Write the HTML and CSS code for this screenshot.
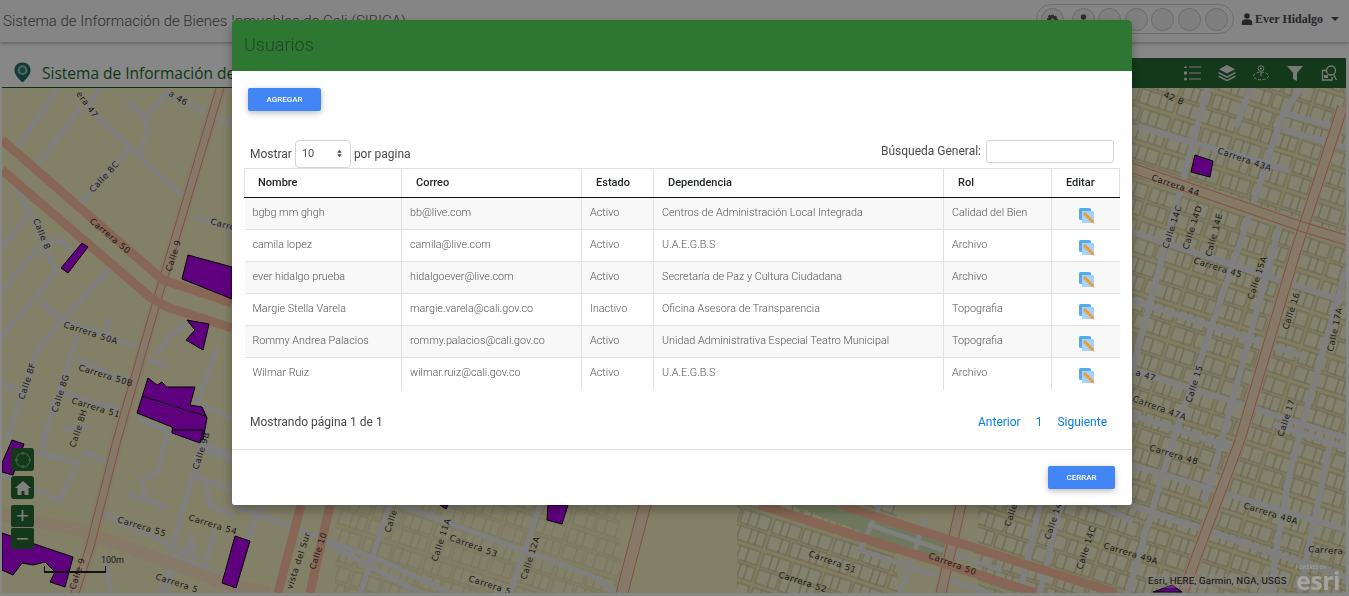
FILE: index.html
```html
<!DOCTYPE html>
<html lang="es">
<head>
<meta charset="utf-8">
<title>SIBICA</title>
<link rel="stylesheet" href="styles.css">
</head>
<body>
<header class="topbar">
  <div class="app-title">Sistema de Información de Bienes Inmuebles de Cali (SIBICA)</div>
  <div class="top-right">
    <div class="pill">
      <span class="circle"><svg viewBox="0 0 16 16" class="circle-ico"><path d="M6.5 2h3l.4 2 1.8-.9 2 2-1 1.8 2 .5v2.800l-2 .5 1 1.800-2 2-1.800-1-.4 2h-3l-.4-2-1.800 1-2-2 1-1.800-2-.5V6.400l2-.5-1-1.800 2-2 1.800.9z" fill="#555"/><circle cx="8" cy="8" r="2" fill="#bbb"/></svg></span>
      <span class="circle"><svg viewBox="0 0 16 16" class="circle-ico"><circle cx="8" cy="5" r="3.400" fill="#555"/><path d="M2.500 16c0-5 2-6.500 5.500-6.500s5.500 1.500 5.500 6.500z" fill="#555"/></svg></span>
      <span class="circle"></span><span class="circle"></span><span class="circle"></span><span class="circle"></span><span class="circle"></span>
    </div>
    <div class="user">
      <svg viewBox="0 0 12 12" class="user-ico"><circle cx="6" cy="3" r="2.800"/><path d="M.8 12V9.500C.8 7.500 2.500 6.300 6 6.300s5.200 1.200 5.200 3.200V12z"/></svg>
      <span class="user-name">Ever Hidalgo</span>
      <span class="caret"></span>
    </div>
  </div>
</header>

<main class="workspace">
  <div class="map-head">
    <div class="map-brand">
      <svg viewBox="0 0 18 22" class="pin"><path d="M9 .5C4 .5.5 4 .5 8.500c0 5 5 9.500 8.500 13 3.500-3.500 8.500-8 8.500-13C17.500 4 14 .5 9 .5z" fill="#1f6f6a"/><circle cx="9" cy="8.500" r="5.200" fill="#9ac7b8"/><circle cx="9" cy="8.500" r="3" fill="#2c7f70"/></svg>
      <span class="brand-text">Sistema de Información de Bienes Inmuebles de Cali</span>
    </div>
    <div class="map-tools">
      <svg viewBox="0 0 18 16" class="tool"><g stroke="#e6e6e6" stroke-width="1.100"><path d="M5 2h12M5 8h12M5 14h12"/></g><path d="M1.500 .5l1.500 2.500H0z M0 6.500h3v3H0z" fill="#e6e6e6"/><circle cx="1.500" cy="14" r="1.500" fill="#e6e6e6"/></svg>
      <svg viewBox="0 0 18 16" class="tool"><path d="M9 0l8 4.200-8 4.200-8-4.200z" fill="#e6e6e6"/><path d="M1 7l8 4.200L17 7l.8 1.200L9 13 .2 8.200z M1 10.500l8 4.200 8-4.200.8 1.200L9 16.500.2 11.700z" fill="#e6e6e6"/></svg>
      <svg viewBox="0 0 18 16" class="tool"><g fill="none" stroke="#e6e6e6"><circle cx="9" cy="3.500" r="2.800"/><path d="M9 6.500v5"/><ellipse cx="9" cy="11" rx="7.500" ry="3.800" stroke-dasharray="3 1.500"/></g><circle cx="9" cy="3.500" r="1" fill="#e6e6e6"/></svg>
      <svg viewBox="0 0 18 16" class="tool"><path d="M1 1h16l-6 7v8l-4-2V8z" fill="#e6e6e6"/></svg>
      <svg viewBox="0 0 18 16" class="tool"><g fill="none" stroke="#e6e6e6" stroke-width="1.300"><circle cx="11" cy="5.500" r="4.500"/><path d="M13.500 9.500l3 5.500M6 5.500H2.500V15H12v-3"/></g><path d="M4 10h4v3H4z" fill="#e6e6e6"/></svg>
    </div>
  </div>

  <div class="map">
    <svg class="map-svg" viewBox="2 88 1344 505" preserveAspectRatio="none">
      <defs>
        <pattern id="lots" width="64" height="36" patternUnits="userSpaceOnUse" patternTransform="rotate(18)">
          <rect width="64" height="36" fill="#f2ecb8"/>
          <g fill="#f8f5d2" stroke="#bdb78e" stroke-width=".8">
            <rect x="2" y="2" width="9" height="14"/><rect x="11" y="2" width="7" height="14"/><rect x="18" y="2" width="12" height="14"/><rect x="33" y="2" width="8" height="14"/><rect x="41" y="2" width="9" height="14"/><rect x="50" y="2" width="12" height="14"/>
            <rect x="2" y="19" width="13" height="14"/><rect x="15" y="19" width="8" height="14"/><rect x="26" y="19" width="9" height="14"/><rect x="35" y="19" width="12" height="14"/><rect x="47" y="19" width="7" height="14"/><rect x="54" y="19" width="8" height="14"/>
          </g>
        </pattern>
      </defs>
      <rect x="0" y="0" width="1349" height="600" fill="#f6f2c2"/>
      <rect x="1132" y="88" width="217" height="510" fill="url(#lots)"/>
      <rect x="335" y="505" width="285" height="90" fill="url(#lots)" opacity=".45"/>
      <rect x="737" y="505" width="160" height="90" fill="url(#lots)"/>
      <rect x="978" y="505" width="157" height="90" fill="url(#lots)"/>
      <path d="M790 505H835L950 545L950 565z" fill="#d2e0b0"/>

      <g class="road">
        <path d="M128 102L145 118L148 130L140 152"/><path d="M167 93L145 118"/><path d="M87 107L183 197"/><path d="M128 150L80 203"/>
        <path d="M80 107L38 165"/><path d="M57 90L17 147"/><path d="M100 90L87 107"/><path d="M197 217L232 230"/><path d="M170 95L232 125"/>
        <path d="M17 190L33 218L55 270"/><path d="M2 247L30 213"/><path d="M2 290L43 243L60 240L73 253"/><path d="M2 337L55 273"/>
        <path d="M110 268L62 320L37 350L7 440"/><path d="M42 303L62 320L140 348"/><path d="M77 337L43 440"/><path d="M2 383L25 393"/><path d="M63 393L123 412"/>
        <path d="M77 360L133 383"/><path d="M157 353L173 333L186 325"/><path d="M110 320L105 337"/><path d="M217 350L197 403"/><path d="M150 360L165 365"/>
        <path d="M200 405L232 418"/><path d="M88 427L65 430"/><path d="M140 420L232 455"/>
        <path d="M48 430L40 453L78 463L60 500"/><path d="M2 475L60 500"/><path d="M85 452L106 462"/><path d="M168 430L158 472L142 480L145 495M130 495L166 507"/>
        <path d="M205 432L180 520L170 552"/><path d="M195 475L232 490"/><path d="M205 450L232 460"/><path d="M205 480L210 505L232 515"/><path d="M107 515L170 545L198 558"/><path d="M195 545L160 590"/>
        <path d="M192 537L188 555M215 533L205 565"/><path d="M176 556L220 575"/><path d="M172 556L165 593"/><path d="M105 560L110 593"/>
        <path d="M232 505L380 560L450 593"/><path d="M262 505L225 593"/><path d="M390 505L360 593"/><path d="M540 505L510 593"/>
        <path d="M400 505L590 575L620 593"/><path d="M330 545L420 593"/>
        <path d="M880 505L860 550L990 593"/><path d="M870 525L1000 570"/><path d="M925 520L900 593"/>
      </g>
      <g class="road wide">
        <path d="M1207 90L1132 370"/><path d="M1283 113L1247 223L1173 440L1128 593"/><path d="M1140 127L1287 170"/><path d="M1135 233L1340 300"/><path d="M1132 370L1343 437"/>
        <path d="M1132 300L1300 355"/><path d="M1250 90L1237 125"/><path d="M1300 90L1283 113L1346 130"/><path d="M1285 130L1346 148"/>
        <path d="M1280 225L1230 410L1205 500"/><path d="M1346 270L1312 390L1290 470L1270 590"/><path d="M1276 425L1346 448"/>
        <path d="M1132 465L1346 530"/><path d="M1130 505L1345 577"/><path d="M1132 415L1240 450"/>
        <path d="M1330 445L1300 590"/><path d="M1040 505L1020 593"/><path d="M1060 505L1040 593"/><path d="M1100 505L1130 520"/>
      </g>

      <g class="ave">
        <path d="M220 88L160 290L117 440L90 547L75 593"/>
        <path d="M1343 107L1297 247L1240 440L1183 593"/>
        <path d="M1132 168L1303 227L1346 240"/>
        <path d="M645 505L622 593"/>
        <path d="M961 505L941 593"/>
        <path d="M2 515L80 530L230 585L270 593"/>
      </g>
      <g class="ave-line">
        <path d="M216 88L156 290L113 440L86 547L71 593"/><path d="M224 88L164 290L121 440L94 547L79 593"/>
        <path d="M1338 105L1292 247L1235 440L1178 593"/><path d="M1348 107L1302 247L1245 440L1188 593"/>
        <path d="M1132 163L1303 222L1346 235"/><path d="M1132 173L1303 232L1346 245"/>
        <path d="M639 505L616 593"/><path d="M651 505L628 593"/><path d="M956 505L936 593"/><path d="M966 505L946 593"/>
      </g>
      <g class="arterial">
        <path d="M2 140L163 280L232 303"/><path d="M2 170L150 297L167 307L232 328"/>
        <path d="M760 505L1036 593"/><path d="M840 505L1116 593"/>
        <path d="M301 505L278 593"/><path d="M330 505L310 593"/>
      </g>

      <g class="plot">
        <path d="M82 243L88 247L68 273L61 268z"/>
        <path d="M188 255L232 267V299L182 279z"/>
        <path d="M187 320L209 324L203 350L186 340L195 330z"/>
        <path d="M148 378L157 385L162 382L167 387L195 387L190 405L202 407L207 418L203 440L173 433L172 427L137 413z"/>
        <path d="M142 396L205 416" fill="none"/>
        <path d="M12 440L24 444L13 475L2 472V463z"/>
        <path d="M2 533L73 557L65 587L50 582L55 572L45 562L33 565L22 563L13 575L2 570z"/>
        <path d="M172 430H203L200 443L172 433z"/>
        <path d="M235 536L250 541L236 588L222 583z"/>
        <path d="M1195 155L1213 161L1210 177L1191 172z"/>
        <path d="M548 505H568L562 524L547 520z"/>
        <path d="M440 505H448L446 509z"/>
        <path d="M1153 592L1172 585L1182 592z"/>
      </g>

      <g class="lbl">
        <text transform="translate(89 222) rotate(40)" letter-spacing="1.500">Carrera 50</text>
        <text transform="translate(63 327) rotate(18)">Carrera 50A</text>
        <text transform="translate(78 370) rotate(17)">Carrera 50B</text>
        <text transform="translate(71 403) rotate(17)">Carrera 51</text>
        <text transform="translate(171 272) rotate(-72)">Calle 9</text>
        <text transform="translate(93 193) rotate(-47)">Calle 8C</text>
        <text transform="translate(33 220) rotate(68)">Calle 8</text>
        <text transform="translate(24 400) rotate(-72)">Calle 8F</text>
        <text transform="translate(57 413) rotate(-72)">Calle 8G</text>
        <text transform="translate(75 448) rotate(-72)">Calle 8H</text>
        <text transform="translate(76 94) rotate(54)">era 47</text>
        <text transform="translate(168 95) rotate(32)">a 46</text>
        <text transform="translate(210 224) rotate(15)">Carre</text>
        <text transform="translate(117 522) rotate(17)">Carrera 55</text>
        <text transform="translate(188 520) rotate(17)">Carrera 54</text>
        <text transform="translate(198 470) rotate(-72)">Calle 9B</text>
        <text transform="translate(75 590) rotate(-72)">Calle 9</text>
        <text transform="translate(155 579) rotate(18)">Carrera 5</text>
        <text transform="translate(1163 97) rotate(22)">42 B</text>
        <text transform="translate(1217 153) rotate(19)" letter-spacing=".6">Carrera 43A</text>
        <text transform="translate(1151 180) rotate(19)" letter-spacing="1.200">Carrera 44</text>
        <text transform="translate(1168 249) rotate(-72)">Calle 14C</text>
        <text transform="translate(1188 250) rotate(-72)">Calle 14D</text>
        <text transform="translate(1211 257) rotate(-75)">Calle 14E</text>
        <text transform="translate(1193 263) rotate(17)" letter-spacing=".4">Carrera 45</text>
        <text transform="translate(1253 300) rotate(-72)">Calle 15A</text>
        <text transform="translate(1288 330) rotate(-72)">Calle 16</text>
        <text transform="translate(1333 352) rotate(-78)">Calle 17A</text>
        <text transform="translate(1191 403) rotate(-72)">Calle 15</text>
        <text transform="translate(1283 437) rotate(-72)">Calle 17</text>
        <text transform="translate(1135 375) rotate(18)">a 47</text>
        <text transform="translate(1132 401) rotate(20)">Carrera 47A</text>
        <text transform="translate(1149 450) rotate(17)">Carrera 48</text>
        <text transform="translate(1243 508) rotate(17)">Carrera 48A</text>
        <text transform="translate(1103 548) rotate(17)">Carrera 49A</text>
        <text transform="translate(1308 552) rotate(4)">Carrera</text>
        <text transform="translate(449 540) rotate(20)">Carrera 53</text>
        <text transform="translate(468 581) rotate(18)">Carrera 5</text>
        <text transform="translate(390 533) rotate(-72)">Calle</text>
        <text transform="translate(437 562) rotate(-72)">Calle 11A</text>
        <text transform="translate(526 580) rotate(-72)">Calle 12A</text>
        <text transform="translate(808 556) rotate(20)">Carrera 51</text>
        <text transform="translate(778 577) rotate(18)">Carrera 52</text>
        <text transform="translate(928 558) rotate(20)">Carrera 50</text>
        <text transform="translate(292 590) rotate(-72)" letter-spacing="1.500">vista del Sur</text>
        <text transform="translate(315 570) rotate(-72)" letter-spacing=".8">Calle 10</text>
        <text transform="translate(1010 527) rotate(-72)">Calle</text>
        <text transform="translate(1050 540) rotate(-72)">Calle 14</text>
        <text transform="translate(1082 570) rotate(-72)">Calle 14C</text>
      </g>
    </svg>

    <div class="geo-btn locate"><svg viewBox="0 0 20 20" class="geo-ico"><circle cx="10" cy="10" r="7" fill="none" stroke="#8fbf95" stroke-width="1"/><path d="M10 2v3M10 15v3M2 10h3M15 10h3" stroke="#8fbf95" stroke-width="1"/></svg></div>
    <div class="geo-btn home"><svg viewBox="0 0 20 20" class="geo-ico"><path d="M10 3L2 10h2.500v7h4v-4h3v4h4v-7H18z" fill="#f0f0f0"/></svg></div>
    <div class="zoom-group">
      <div class="zoom-btn">+</div>
      <div class="zoom-btn">−</div>
    </div>
    <div class="scale"><span class="scale-label">100m</span></div>
    <div class="attrib">Esri, HERE, Garmin, NGA, USGS</div>
    <div class="esri"><span class="esri-powered">POWERED BY</span><span class="esri-word">esri</span></div>
  </div>
</main>

<div class="backdrop"></div>

<section class="modal">
  <div class="modal-head"><h1 class="modal-title">Usuarios</h1></div>
  <div class="modal-body">
    <div class="add-row"><button class="btn">AGREGAR</button></div>
    <div class="dt-controls">
      <div class="dt-length">Mostrar
        <span class="select"><span>10</span><svg viewBox="0 0 8 12" class="select-arrows"><path d="M4 1l3 4H1zM4 11L1 7h6z" fill="#444"/></svg></span>
        por pagina</div>
      <div class="dt-search">Búsqueda General:<span class="input"></span></div>
    </div>
    <table class="users">
      <colgroup><col class="c1"><col class="c2"><col class="c3"><col class="c4"><col class="c5"><col class="c6"></colgroup>
      <thead>
        <tr><th>Nombre</th><th>Correo</th><th>Estado</th><th>Dependencia</th><th>Rol</th><th>Editar</th></tr>
      </thead>
      <tbody>
        <tr><td>bgbg mm ghgh</td><td>bb@live.com</td><td>Activo</td><td>Centros de Administración Local Integrada</td><td>Calidad del Bien</td><td class="edit"><svg viewBox="0 0 18 18" class="edit-ico"><use href="#edit"/></svg></td></tr>
        <tr><td>camila lopez</td><td>camila@live.com</td><td>Activo</td><td>U.A.E.G.B.S</td><td>Archivo</td><td class="edit"><svg viewBox="0 0 18 18" class="edit-ico"><use href="#edit"/></svg></td></tr>
        <tr><td>ever hidalgo prueba</td><td>hidalgoever@live.com</td><td>Activo</td><td>Secretaría de Paz y Cultura Ciudadana</td><td>Archivo</td><td class="edit"><svg viewBox="0 0 18 18" class="edit-ico"><use href="#edit"/></svg></td></tr>
        <tr><td>Margie Stella Varela</td><td>margie.varela@cali.gov.co</td><td>Inactivo</td><td>Oficina Asesora de Transparencia</td><td>Topografia</td><td class="edit"><svg viewBox="0 0 18 18" class="edit-ico"><use href="#edit"/></svg></td></tr>
        <tr><td>Rommy Andrea Palacios</td><td>rommy.palacios@cali.gov.co</td><td>Activo</td><td>Unidad Administrativa Especial Teatro Municipal</td><td>Topografia</td><td class="edit"><svg viewBox="0 0 18 18" class="edit-ico"><use href="#edit"/></svg></td></tr>
        <tr class="last"><td>Wilmar Ruiz</td><td>wilmar.ruiz@cali.gov.co</td><td>Activo</td><td>U.A.E.G.B.S</td><td>Archivo</td><td class="edit"><svg viewBox="0 0 18 18" class="edit-ico"><use href="#edit"/></svg></td></tr>
      </tbody>
    </table>
    <div class="dt-foot">
      <div class="dt-info">Mostrando página 1 de 1</div>
      <nav class="pager"><a>Anterior</a><a>1</a><a>Siguiente</a></nav>
    </div>
  </div>
  <div class="modal-foot"><button class="btn">CERRAR</button></div>
</section>

<svg class="sprite" width="0" height="0">
  <symbol id="edit" viewBox="0 0 18 18">
    <rect x="1" y="1" width="12" height="12" rx="1.500" fill="#58aaf0"/>
    <rect x="4" y="4" width="12" height="12" rx="1" fill="#a5d2f8"/>
    <path d="M6 6L15 15" stroke="#f39c2c" stroke-width="3"/>
    <path d="M14.500 13.500l2.800 3.800-3.800-2.800z" fill="#e77f7f"/>
  </symbol>
</svg>
</body>
</html>
```
FILE: styles.css
```css
* { box-sizing: border-box; }
html, body { margin: 0; padding: 0; }
body {
  width: 1349px;
  height: 596px;
  overflow: hidden;
  background: #fff;
  font-family: Roboto, "Liberation Sans", sans-serif;
  color: #212529;
}
.topbar {
  height: 42px;
  background: #fbfbfb;
  box-shadow: 0 1px 4px rgba(0,0,0,.35);
  display: flex;
  align-items: center;
  justify-content: space-between;
  padding: 0 10px 0 3px;
}
.app-title { font-size: 15px; font-weight: 300; color: #5a5a5a; }
.top-right { display: flex; align-items: center; gap: 7px; }
.pill {
  width: 198px;
  height: 30px;
  border: 1px solid #d0d0d0;
  border-radius: 15px;
  display: flex;
  align-items: center;
  padding-left: 4px;
  gap: 3.600px;
  position: relative;
  top: -2px;
}
.circle {
  width: 23px;
  height: 23px;
  border-radius: 50%;
  border: 1px solid #c8c8c8;
  background: #f0f0f0;
  display: flex;
  align-items: center;
  justify-content: center;
}
.circle:nth-child(1) { margin-right: 4px; }
.circle-ico { width: 13px; height: 13px; }
.user { display: flex; align-items: center; gap: 2px; position: relative; top: -2px; }
.user-ico { width: 12px; height: 12px; fill: #4a4a4a; }
.user-name { font-family: "Liberation Serif", serif; font-weight: 700; font-size: 12px; color: #4a4a4a; width: 74px; }
.caret { width: 0; height: 0; border: 4px solid transparent; border-top-color: #4a4a4a; border-bottom: 0; }

.workspace { padding: 16px 3px 0 2px; }
.map-head {
  height: 30px;
  display: flex;
  justify-content: space-between;
  background: #fff;
  border-bottom: 1px solid #1b5e20;
}
.map-brand { display: flex; align-items: center; gap: 11px; padding-left: 12px; }
.pin { width: 17px; height: 21px; }
.brand-text { font-family: "Open Sans", sans-serif; font-size: 15.500px; color: #1e6b2c; white-space: nowrap; }
.map-tools {
  width: 700px;
  background: #246b32;
  margin-bottom: -1px;
  display: flex;
  align-items: center;
  justify-content: flex-end;
  gap: 16px;
  padding-right: 8px;
}
.tool { width: 18px; height: 16px; }

.map { position: relative; height: 505px; overflow: hidden; }
.map-svg { display: block; width: 1344px; height: 505px; }
.road path { fill: none; stroke: #f0f0f0; stroke-width: 5; stroke-linecap: round; stroke-linejoin: round; }
.road.wide path { stroke-width: 6; }
.ave path { fill: none; stroke: #ffe4c2; stroke-width: 13; stroke-linejoin: round; }
.ave-line path { fill: none; stroke: #f09a82; stroke-width: 1; }
.arterial path { fill: none; stroke: #ffc0a0; stroke-width: 9; stroke-linejoin: round; }
.plot path { fill: #b400f0; stroke: #000; stroke-width: 1; }
.lbl text { font-family: "DejaVu Sans", sans-serif; font-size: 8.500px; letter-spacing: .5px; fill: #333; }

.geo-btn { position: absolute; left: 9px; width: 23px; height: 23px; background: #246b32; border-radius: 3px; display: flex; align-items: center; justify-content: center; }
.geo-btn.locate { top: 360px; }
.geo-btn.home { top: 388px; }
.geo-ico { width: 20px; height: 20px; }
.zoom-group { position: absolute; left: 9px; top: 417px; width: 23px; }
.zoom-btn { height: 22px; background: #246b32; color: #eee; font: 400 22px/21px "Liberation Sans", sans-serif; text-align: center; border-radius: 2px; }
.zoom-btn + .zoom-btn { border-top: 1px solid #ddd; }
.scale { position: absolute; left: 42px; top: 478px; width: 62px; height: 7px; border: 1px solid #222; border-width: 0 1px 2px; }
.scale-label { position: absolute; right: -19px; top: -11px; font-size: 9px; color: #333; }
.attrib { position: absolute; left: 1144px; top: 486px; height: 14px; padding: 0 2px; background: rgba(255,255,255,.35); font-size: 9.700px; line-height: 14px; letter-spacing: .2px; color: #222; white-space: nowrap; }
.esri { position: absolute; z-index: 1; left: 1294px; top: 477px; display: flex; flex-direction: column; color: #a4a4a0; }
.esri-powered { font-size: 4.500px; letter-spacing: .3px; line-height: 5px; }
.esri-word { font: 700 25px/20px "Open Sans", sans-serif; letter-spacing: -.5px; }

.backdrop { position: fixed; inset: 0; background: rgba(0,0,0,.47); }

.modal {
  position: fixed;
  z-index: 2;
  left: 232px;
  top: 20px;
  width: 900px;
  height: 485px;
  background: #fff;
  border-radius: 3px;
  box-shadow: 0 5px 12px rgba(0,0,0,.3);
  display: flex;
  flex-direction: column;
  overflow: hidden;
}
.modal-head { height: 51px; background: #2e7733; padding: 14px 12px 0; flex: none; }
.modal-title { margin: 0; font-size: 18px; font-weight: 300; line-height: 22px; color: #1f4526; }
.modal-body { flex: 1; padding: 17px 12px 0; min-height: 0; }
.add-row { height: 52px; padding-left: 4px; }
.btn {
  display: block;
  height: 23px;
  width: 73px;
  padding: 0;
  border: 0;
  border-radius: 2px;
  background: #4285f4;
  color: #fff;
  font: 500 8px Roboto, sans-serif;
  box-shadow: 0 2px 5px rgba(0,0,0,.16), 0 2px 10px rgba(0,0,0,.12);
}
.dt-controls { display: flex; justify-content: space-between; align-items: flex-start; height: 28px; padding: 0 6px; font-size: 12px; color: #4a4a4a; }
.dt-length { display: flex; align-items: center; gap: 3px; height: 27px; }
.select { width: 56px; height: 28px; border: 1px solid #ced4da; border-radius: 4px; display: flex; align-items: center; justify-content: space-between; padding: 0 7px 0 6px; color: #495057; font-size: 11px; }
.select-arrows { width: 7px; height: 9px; }
.dt-search { display: flex; align-items: flex-start; gap: 5px; line-height: 22px; }
.input { display: block; width: 128px; height: 23px; border: 1px solid #ced4da; border-radius: 3px; background: #fff; }

.users { width: 875px; border-collapse: collapse; table-layout: fixed; }
.c1 { width: 157px; } .c2 { width: 180px; } .c3 { width: 72px; } .c4 { width: 290px; } .c5 { width: 108px; } .c6 { width: 68px; }
.users th {
  height: 29px;
  padding: 0 0 2px 14px;
  border: 1px solid #dee2e6;
  border-bottom: 1px solid #111;
  text-align: left;
  font-size: 11px;
  font-weight: 500;
  color: #212529;
}
.users th:first-child { padding-left: 13px; }
.users td {
  height: 32px;
  padding: 0 0 3px 8px;
  border: 1px solid #dee2e6;
  border-top: 0;
  font-size: 10.800px;
  font-weight: 300;
  color: #555;
  white-space: nowrap;
}
.users td:first-child, .users td:last-child { border-left: 0; border-right: 0; }
.users tbody tr:nth-child(odd) { background: #f8f8f8; }
.users .last td { border-bottom: 0; }
.users td.edit { padding: 5px 0 0 0; text-align: center; }
.edit-ico { display: block; width: 18px; height: 18px; margin: 0 auto; position: relative; left: 1px; }

.dt-foot { display: flex; justify-content: space-between; align-items: center; padding: 5px 13px 0 6px; height: 59px; font-size: 12px; color: #4a4a4a; }
.pager { display: flex; gap: 15px; color: #0a7cf0; }
.modal-foot { height: 56px; flex: none; border-top: 1px solid #dee2e6; padding: 16px 17px 0 0; display: flex; justify-content: flex-end; }
.modal-foot .btn { width: 67px; }
.sprite { position: absolute; }
```
